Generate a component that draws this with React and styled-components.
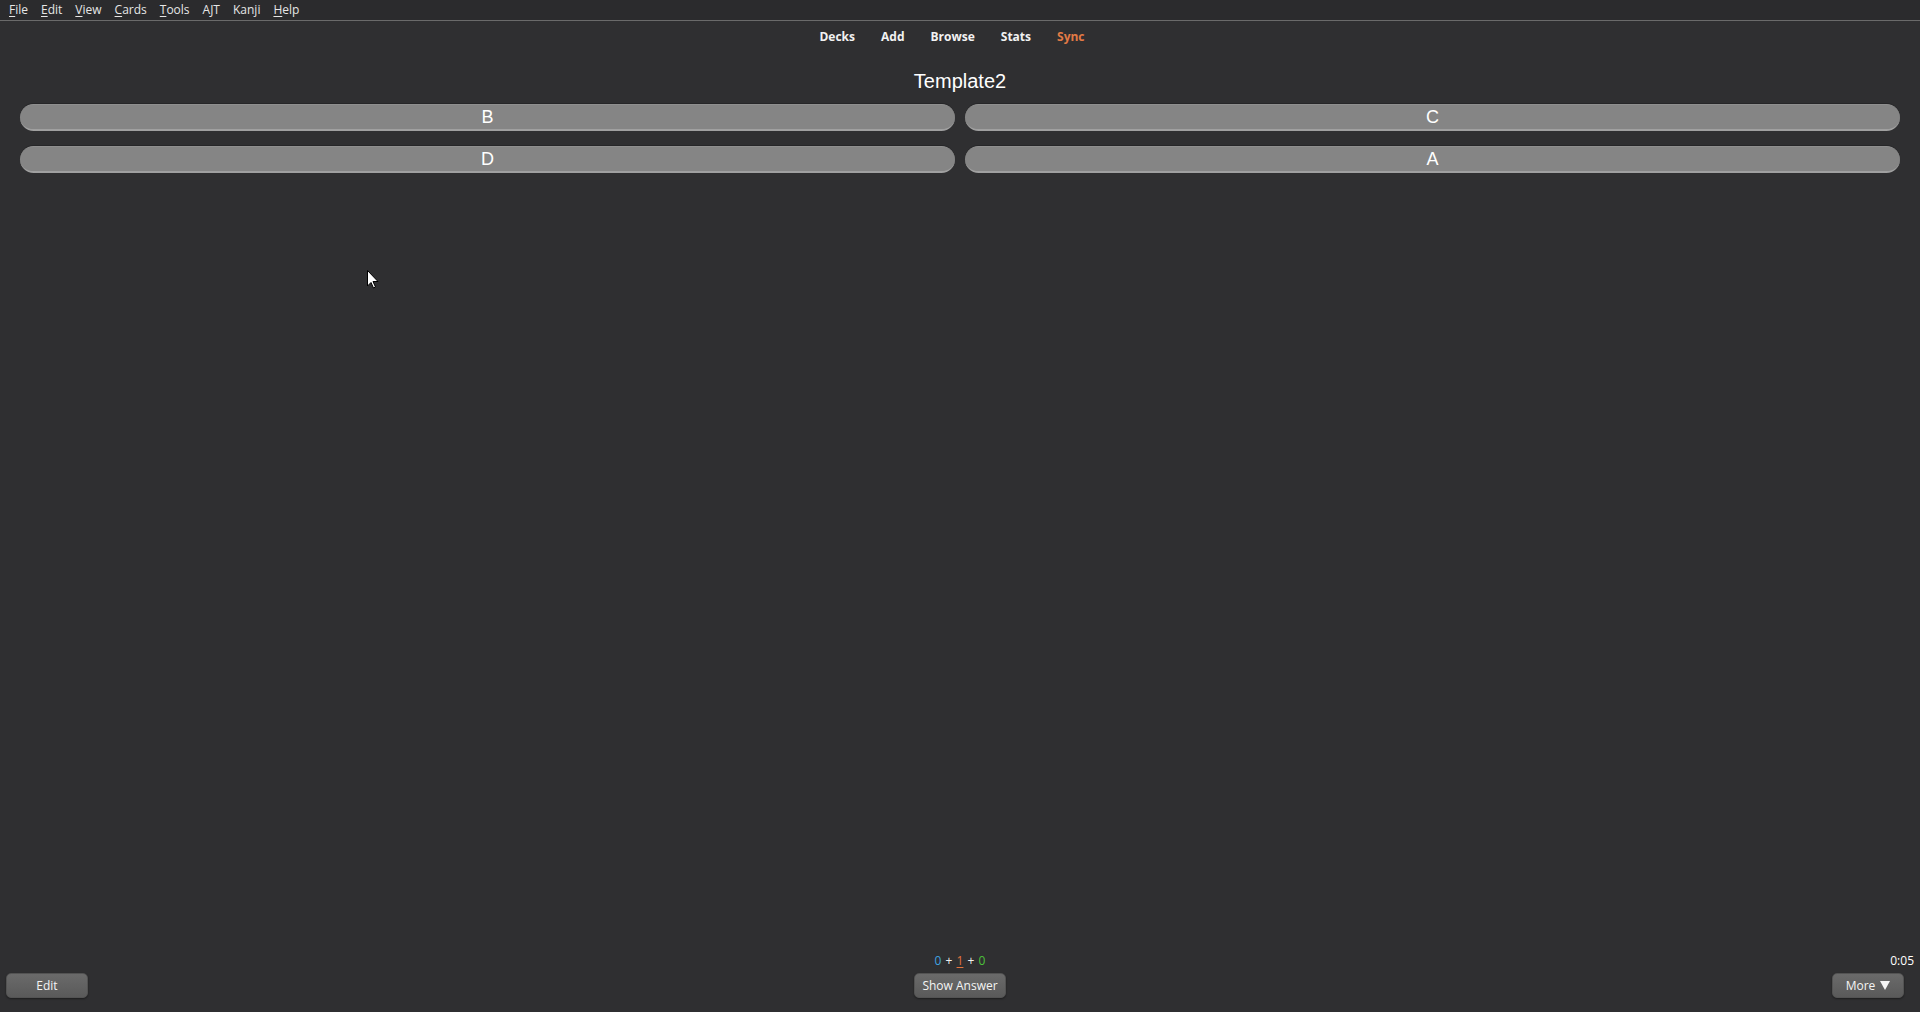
import React from "react";
import styled, { createGlobalStyle } from "styled-components";

const GlobalStyle = createGlobalStyle`
    html, body {
        margin: 0;
        padding: 0;
        background: #2f2f31;
        overflow: hidden;
    }
    #root {
        height: 1012px;
    }
`

const Page = styled.div`
    height: 1012px;
    display: flex;
    flex-direction: column;
    background: #2f2f31;
    position: relative;
`

const MenuBar = styled.div`
    height: 20px;
    display: flex;
    align-items: center;
    padding-left: 9px;
    border-bottom: 1px solid #6a6a6a;
    background: #2b2b2d;
`

const MenuItem = styled.span`
    font-family: "Open Sans", "Noto Sans", sans-serif;
    font-size: 12px;
    color: #e6e6e6;
    margin-right: ${p => p.$gap}px;
    line-height: 18px;
`

const Mnemonic = styled.span`
    text-decoration: underline;
    text-underline-offset: 2px;
`

const Toolbar = styled.div`
    height: 30px;
    display: flex;
    justify-content: center;
    align-items: center;
    gap: 26px;
    padding-right: 16px;
`

const ToolLink = styled.span`
    font-family: "Open Sans", "Noto Sans", sans-serif;
    font-size: 12px;
    font-weight: 700;
    color: ${p => p.$accent ? "#e27a45" : "#f2f2f2"};
`

const Card = styled.div`
    flex: 1;
    padding: 0 20px;
    display: flex;
    flex-direction: column;
    align-items: center;
`

const Title = styled.div`
    font-family: "Liberation Sans", Arial, sans-serif;
    font-size: 20px;
    color: #ffffff;
    margin-top: 19px;
    height: 23px;
    line-height: 23px;
`

const ChoiceGrid = styled.div`
    width: 100%;
    display: grid;
    grid-template-columns: 1fr 1fr;
    column-gap: 10px;
    row-gap: 15px;
    margin-top: 11px;
`

const Choice = styled.div`
    height: 27px;
    box-sizing: border-box;
    border-radius: 14px;
    background: #858585;
    border-top: 1px solid #8f8f8f;
    border-bottom: 2px solid #a0a0a0;
    box-shadow: 0 -1px 0 #262628;
    display: flex;
    justify-content: center;
    align-items: center;
    font-family: "Liberation Sans", Arial, sans-serif;
    font-size: 18px;
    color: #ffffff;
`

const BottomBar = styled.div`
    height: 56px;
    display: grid;
    grid-template-columns: 1fr auto 1fr;
    align-items: end;
    padding: 0 6px 14px 6px;
`

const Side = styled.div`
    display: flex;
    flex-direction: column;
    align-items: ${p => p.$right ? "flex-end" : "flex-start"};
    gap: 4px;
`

const Middle = styled.div`
    display: flex;
    flex-direction: column;
    align-items: center;
    gap: 4px;
`

const Counts = styled.div`
    font-family: "Open Sans", "Noto Sans", sans-serif;
    font-size: 12px;
    color: #f0f0f0;
    height: 16px;
    line-height: 16px;
    word-spacing: 1px;
`

const Count = styled.span`
    color: ${p => p.$color};
    text-decoration: ${p => p.$underline ? "underline" : "none"};
    text-underline-offset: 2px;
`

const Timer = styled.div`
    font-family: "Open Sans", "Noto Sans", sans-serif;
    font-size: 12px;
    color: #ffffff;
    height: 16px;
    line-height: 16px;
`

const BarButton = styled.div`
    width: ${p => p.$w}px;
    height: 25px;
    box-sizing: border-box;
    border-radius: 5px;
    background: linear-gradient(#6a6a6a, #5a5a5a);
    border: 1px solid #535353;
    box-shadow: 0 1px 2px rgba(0,0,0,0.4);
    display: flex;
    justify-content: center;
    align-items: center;
    font-family: "Open Sans", "Noto Sans", sans-serif;
    font-size: 12px;
    color: #f4f4f4;
    gap: 5px;
    margin-right: ${p => p.$mr || 0}px;
`

const Cursor = styled.svg`
    position: absolute;
    left: 367px;
    top: 270px;
`

const menus = [
    { m: "F", rest: "ile", gap: 13 },
    { m: "E", rest: "dit", gap: 13 },
    { m: "V", rest: "iew", gap: 13 },
    { m: "C", rest: "ards", gap: 13 },
    { m: "T", rest: "ools", gap: 13 },
    { m: "", rest: "AJT", gap: 13 },
    { m: "", rest: "Kanji", gap: 13 },
    { m: "H", rest: "elp", gap: 0 },
];

const choices = ["B", "C", "D", "A"];

export default function App() {
    return (
        <Page>
            <GlobalStyle />
            <MenuBar>
                {menus.map((item, i) => (
                    <MenuItem key={i} $gap={item.gap}>
                        {item.m && <Mnemonic>{item.m}</Mnemonic>}{item.rest}
                    </MenuItem>
                ))}
            </MenuBar>
            <Toolbar>
                <ToolLink>Decks</ToolLink>
                <ToolLink>Add</ToolLink>
                <ToolLink>Browse</ToolLink>
                <ToolLink>Stats</ToolLink>
                <ToolLink $accent>Sync</ToolLink>
            </Toolbar>
            <Card>
                <Title>Template2</Title>
                <ChoiceGrid>
                    {choices.map(c => <Choice key={c}>{c}</Choice>)}
                </ChoiceGrid>
            </Card>
            <BottomBar>
                <Side>
                    <BarButton $w={82}>Edit</BarButton>
                </Side>
                <Middle>
                    <Counts>
                        <Count $color="#3fa3e0">0</Count> + <Count $color="#e2733f" $underline>1</Count> + <Count $color="#4cc23a">0</Count>
                    </Counts>
                    <BarButton $w={92}>Show Answer</BarButton>
                </Middle>
                <Side $right>
                    <Timer>0:05</Timer>
                    <BarButton $w={72} $mr={10}>
                        More
                        <svg width="10" height="9" viewBox="0 0 10 9"><path d="M0 0 H10 L5 9 Z" fill="#f4f4f4" /></svg>
                    </BarButton>
                </Side>
            </BottomBar>
            <Cursor width="12" height="19" viewBox="0 0 12 19">
                <path d="M0.5 0.5 V16 L4 12.5 L6.5 18 L8.5 17 L6 11.5 H11 Z" fill="#fff" stroke="#000" strokeWidth="1" />
            </Cursor>
        </Page>
    );
}
